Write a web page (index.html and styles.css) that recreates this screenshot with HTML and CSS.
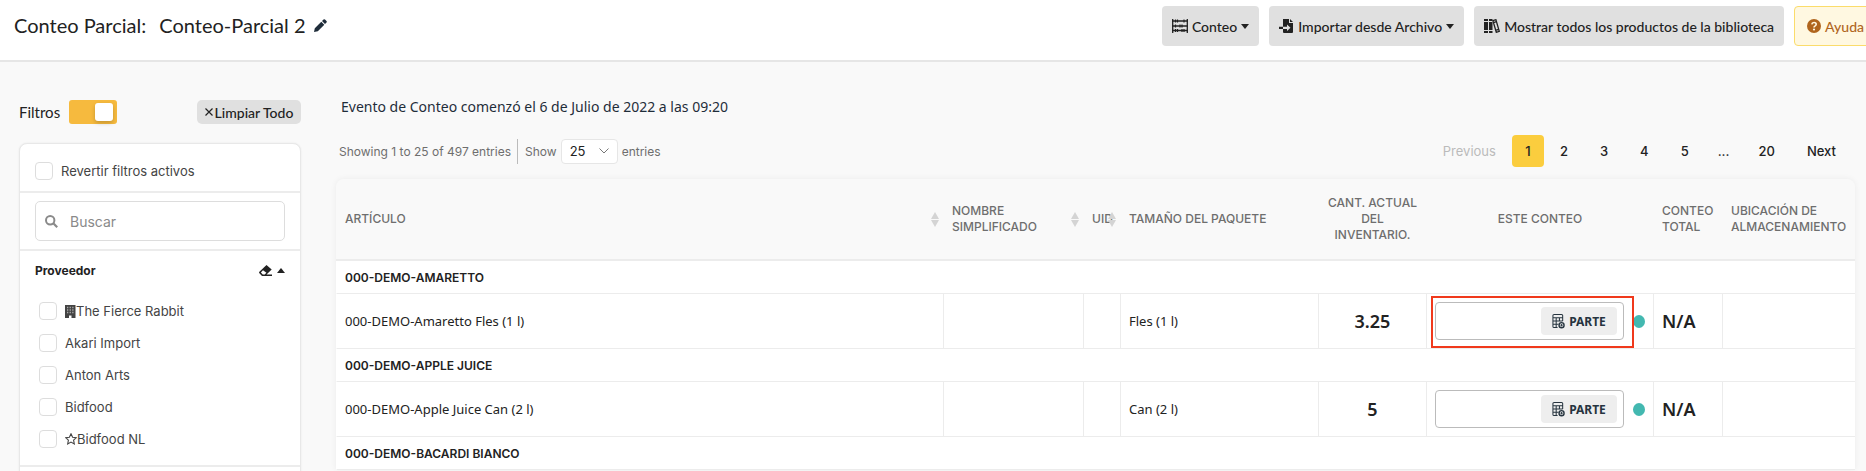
FILE: index.html
```html
<!DOCTYPE html>
<html lang="es">

<head>
    <meta charset="UTF-8">
    <meta name="viewport" content="width=device-width, initial-scale=1.0">
    <title>Conteo Parcial</title>
    <link rel="stylesheet" href="styles.css">
</head>

<body>
    <!-- iconos -->
    <svg class="defs" width="0" height="0">
        <symbol id="i-calc" viewBox="0 0 14 16">
            <path d="M11.5 8V2.2Q11.5 1 10.300 1H2.200Q1 1 1 2.200V13.800Q1 15 2.200 15H6M1 4.500H11.500M1 8H11.500M1 11.500H7M4.500 4.500V15M8 4.500V8.500" fill="none" stroke="currentColor" stroke-width="1.1" />
            <circle cx="10.300" cy="12.500" r="2.700" fill="#eee" stroke="currentColor" stroke-width="1.500" />
            <path d="M10.300 11.200V13.800M9 12.500H11.600" stroke="currentColor" stroke-width="1" />
        </symbol>
    </svg>

    <header class="topbar">
        <h1>Conteo Parcial: <span>Conteo-Parcial 2</span></h1>
        <button class="edit" aria-label="Editar nombre">
            <svg width="13" height="13" viewBox="0 0 13 13"><path d="M0 13L.8 9.200L7.300 2.700L10.300 5.700L3.800 12.200ZM8 2L9.500.5Q10.200-.1 11 .5L12.500 2Q13.200 2.800 12.500 3.500L11 5Z" fill="currentColor" /></svg>
        </button>
        <div class="actions">
            <button class="btn">
                <svg width="16" height="14" viewBox="0 0 16 14"><path d="M.7 0V14M15.300 0V14M0 2H16M0 7H16M0 11.500H16" stroke="currentColor" stroke-width="1.300" /><path d="M3.500.5V3.500M5.500.5V3.500M12 .5V3.500M3.500 5.500V8.500M8 5.500V8.500M10 5.500V8.500M3.500 10V13M5.500 10V13M10 10V13M12 10V13" stroke="currentColor" stroke-width="1.200" /></svg>
                Conteo
                <span class="caret"></span>
            </button>
            <button class="btn">
                <svg width="15" height="14" viewBox="0 0 15 14"><path d="M4 0H10V4H14V13Q14 14 13 14H5Q4 14 4 13V10H8V12L11.500 8.700L8 5.500V7.800H4ZM11 0L14 3H11ZM0 7.800H4V10H0Z" fill="currentColor" /></svg>
                Importar desde Archivo
                <span class="caret"></span>
            </button>
            <button class="btn">
                <svg width="16" height="14" viewBox="0 0 16 14"><path d="M0 0H4V2H0ZM0 3H4V11H0ZM0 12H4V14H0ZM5 0H8.500V2H5ZM5 3H8.500V11H5ZM5 12H8.500V14H5Z" fill="currentColor" /><path d="M8.900 1.700L11.900.7L15.300 12.300L12.300 13.300ZM9.500 3.700L12.500 2.700M11.700 11.300L14.700 10.300" fill="none" stroke="currentColor" stroke-width="1.300" /></svg>
                Mostrar todos los productos de la biblioteca
            </button>
            <button class="btn help">
                <svg width="14" height="14" viewBox="0 0 14 14"><circle cx="7" cy="7" r="7" fill="currentColor" /><path d="M4.800 5.300Q5 3.500 7 3.500Q9.200 3.500 9.200 5.300Q9.200 6.300 8.100 6.900Q7 7.400 7 8.400" fill="none" stroke="#fff8e1" stroke-width="1.600" /><circle cx="7" cy="10.500" r="1.100" fill="#fff8e1" /></svg>
                Ayuda
            </button>
        </div>
    </header>

    <div class="page">
        <aside class="sidebar">
            <div class="filter_head">
                <label for="filters_on">Filtros</label>
                <input type="checkbox" id="filters_on" class="switch" checked>
                <button class="clear">
                    <svg width="8" height="8" viewBox="0 0 8 8"><path d="M.5.5L7.500 7.500M7.500.5L.5 7.500" stroke="currentColor" stroke-width="1.200" /></svg>
                    Limpiar Todo
                </button>
            </div>
            <div class="card">
                <div class="block revert">
                    <label class="check"><input type="checkbox">Revertir filtros activos</label>
                </div>
                <div class="block search_block">
                    <div class="search">
                        <svg width="13" height="13" viewBox="0 0 13 13"><circle cx="5.200" cy="5.200" r="4.200" fill="none" stroke="currentColor" stroke-width="2" /><path d="M8.300 8.300L12.200 12.200" stroke="currentColor" stroke-width="2.200" /></svg>
                        <input type="text" placeholder="Buscar" aria-label="Buscar">
                    </div>
                </div>
                <div class="block vendor">
                    <div class="vendor_head">
                        <h2>Proveedor</h2>
                        <button aria-label="Borrar y plegar">
                            <svg width="13" height="11" viewBox="0 0 13 11"><path d="M7.500 0L12.700 4.500L7.500 9.500H13V11H3L.4 8.300Q-.2 7.500 .4 6.800ZM4 5.200L1.900 7.400L3.800 9.400H5.700L7.400 7.700Z" fill="currentColor" fill-rule="evenodd" /></svg>
                            <span class="caret up"></span>
                        </button>
                    </div>
                    <label class="check"><input type="checkbox">
                        <span><svg width="11" height="13" viewBox="0 0 11 13"><path d="M0 0H10.500V13H6.500V10.500H4V13H0Z" fill="currentColor" /><path d="M2 2.500H8.500M2 5H8.500M2 7.500H8.500" stroke="#aaa" stroke-width="1.300" stroke-dasharray="1.300 1.300" /></svg>The Fierce Rabbit</span></label>
                    <label class="check"><input type="checkbox">Akari Import</label>
                    <label class="check"><input type="checkbox">Anton Arts</label>
                    <label class="check"><input type="checkbox">Bidfood</label>
                    <label class="check"><input type="checkbox">
                        <span><svg width="12" height="12" viewBox="0 0 12 12"><path d="M6 .8L7.600 4.200L11.300 4.700L8.600 7.200L9.300 10.900L6 9.100L2.700 10.900L3.400 7.200L.7 4.700L4.400 4.200Z" fill="none" stroke="currentColor" stroke-width="1.100" /></svg>Bidfood NL</span></label>
                </div>
                <div class="block next_block"></div>
            </div>
        </aside>

        <main>
            <p class="event">Evento de Conteo comenzó el 6 de Julio de 2022 a las 09:20</p>
            <div class="table_bar">
                <span class="info">Showing 1 to 25 of 497 entries</span>
                <label class="length">Show
                    <select>
                        <option>25</option>
                        <option>50</option>
                        <option>100</option>
                    </select>
                    entries</label>
                <nav class="pages">
                    <a href="#" class="off">Previous</a>
                    <a href="#" class="current">1</a>
                    <a href="#">2</a>
                    <a href="#">3</a>
                    <a href="#">4</a>
                    <a href="#">5</a>
                    <span>...</span>
                    <a href="#">20</a>
                    <a href="#">Next</a>
                </nav>
            </div>

            <div class="table_card">
                <table>
                    <colgroup>
                        <col>
                        <col class="c_name">
                        <col class="c_uid">
                        <col class="c_size">
                        <col class="c_qty">
                        <col class="c_count">
                        <col class="c_total">
                        <col class="c_place">
                    </colgroup>
                    <thead>
                        <tr>
                            <th class="sort">Artículo</th>
                            <th class="sort">Nombre simplificado</th>
                            <th class="sort">UID</th>
                            <th>Tamaño del paquete</th>
                            <th class="mid">Cant. actual del inventario.</th>
                            <th class="mid">Este conteo</th>
                            <th>Conteo total</th>
                            <th>Ubicación de almacenamiento</th>
                        </tr>
                    </thead>
                    <tbody>
                        <tr class="group">
                            <td colspan="8">000-DEMO-AMARETTO</td>
                        </tr>
                        <tr class="item">
                            <td>000-DEMO-Amaretto Fles (1 l)</td>
                            <td></td>
                            <td></td>
                            <td>Fles (1 l)</td>
                            <td class="mid num">3.25</td>
                            <td class="marked">
                                <div class="count">
                                    <div class="field">
                                        <input type="text" aria-label="Este conteo">
                                        <button><svg width="13" height="16"><use href="#i-calc" /></svg>PARTE</button>
                                    </div>
                                    <span class="dot"></span>
                                </div>
                            </td>
                            <td class="num">N/A</td>
                            <td></td>
                        </tr>
                        <tr class="group">
                            <td colspan="8">000-DEMO-APPLE JUICE</td>
                        </tr>
                        <tr class="item">
                            <td>000-DEMO-Apple Juice Can (2 l)</td>
                            <td></td>
                            <td></td>
                            <td>Can (2 l)</td>
                            <td class="mid num">5</td>
                            <td>
                                <div class="count">
                                    <div class="field">
                                        <input type="text" aria-label="Este conteo">
                                        <button><svg width="13" height="16"><use href="#i-calc" /></svg>PARTE</button>
                                    </div>
                                    <span class="dot"></span>
                                </div>
                            </td>
                            <td class="num">N/A</td>
                            <td></td>
                        </tr>
                        <tr class="group">
                            <td colspan="8">000-DEMO-BACARDI BIANCO</td>
                        </tr>
                    </tbody>
                </table>
            </div>
        </main>
    </div>
</body>

</html>
```

FILE: styles.css
```css
* {
    box-sizing: border-box;
    margin: 0;
    padding: 0;
}

html {
    overflow: hidden;
}

body {
    background-color: #f9f9f9;
    color: #222;
    font-family: Inter, "Liberation Sans", sans-serif;
    font-size: 13px;
}

button {
    border: none;
    background: none;
    color: inherit;
    font-family: inherit;
    white-space: nowrap;
}

svg {
    flex: none;
}

.defs {
    position: absolute;
}

/* cabecera */
.topbar {
    display: flex;
    align-items: flex-start;
    height: 62px;
    padding: 6px 0 0 14px;
    border-bottom: 2px solid #e6e6e6;
    background-color: #fff;
}

h1 {
    font-family: Lato, sans-serif;
    font-size: 20px;
    font-weight: 400;
    line-height: 38px;
    white-space: nowrap;
}

h1 span {
    margin-left: 8px;
}

.edit {
    display: flex;
    align-items: center;
    height: 38px;
    margin-left: 8px;
    color: #1f2d3a;
}

.actions {
    display: flex;
    gap: 10px;
    margin-left: auto;
    margin-right: -11px;
}

.btn {
    display: flex;
    align-items: center;
    gap: 4px;
    height: 40px;
    padding: 0 10px;
    border-radius: 4px;
    background-color: #e0e0e0;
    font-family: Lato, sans-serif;
    font-size: 14px;
    font-weight: 500;
}

.caret {
    border: 4px solid transparent;
    border-top: 5px solid currentColor;
    border-bottom: none;
}

.caret.up {
    border-top: none;
    border-bottom: 5px solid currentColor;
}

.help {
    padding: 0 12px;
    border: 1px solid #fbdc6b;
    background-color: #fff8e1;
    color: #b0651d;
}

.page {
    display: flex;
    gap: 35px;
    padding: 38px 11px 0 19px;
}

/* filtros */
.sidebar {
    flex: none;
    width: 282px;
}

.filter_head {
    display: flex;
    align-items: center;
    gap: 9px;
    height: 24px;
    font-family: Lato, sans-serif;
    font-size: 15px;
}

.switch {
    display: flex;
    align-items: center;
    justify-content: flex-end;
    width: 48px;
    height: 24px;
    padding: 0 4px;
    border-radius: 3px;
    background-color: #f6ba3e;
    appearance: none;
}

.switch::before {
    content: "";
    width: 18px;
    height: 18px;
    border-radius: 3px;
    background-color: #fff;
    box-shadow: 0 2px 4px rgba(0, 0, 0, .2);
}

.clear {
    display: flex;
    align-items: center;
    justify-content: center;
    gap: 2px;
    width: 104px;
    height: 24px;
    margin-left: auto;
    border-radius: 5px;
    background-color: #e0e0e0;
    font-size: 14px;
    font-weight: 500;
}

.card {
    margin-top: 19px;
    border: 1px solid #e8e8e8;
    border-radius: 8px;
    background-color: #fff;
    box-shadow: 0 0 2px rgba(0, 0, 0, .08);
}

.block {
    padding: 0 15px;
    border-bottom: 2px solid #ececec;
}

.revert {
    padding-top: 11px;
    padding-bottom: 4px;
}

.check {
    display: flex;
    align-items: center;
    gap: 8px;
    height: 32px;
    color: #444;
}

.check input {
    width: 18px;
    height: 18px;
    border: 1px solid #ddd;
    border-radius: 4px;
    background-color: #fff;
    appearance: none;
}

.check span {
    display: flex;
    align-items: center;
}

.search_block {
    padding-top: 8px;
    padding-bottom: 8px;
}

.search {
    display: flex;
    align-items: center;
    gap: 12px;
    height: 40px;
    padding: 0 9px;
    border: 1px solid #ddd;
    border-radius: 5px;
    color: #8a8a8a;
}

.search input {
    flex: 1;
    min-width: 0;
    border: none;
    outline: none;
    font-family: inherit;
    font-size: 14px;
}

.search input::placeholder {
    color: #8a8a8a;
}

.vendor {
    padding-bottom: 10px;
}

.vendor_head {
    display: flex;
    align-items: center;
    justify-content: space-between;
    height: 44px;
    padding-bottom: 5px;
}

.vendor_head button {
    display: flex;
    align-items: center;
    gap: 5px;
}

h2 {
    font-size: 12px;
    font-weight: 700;
}

.vendor .check {
    padding-left: 4px;
}

.next_block {
    height: 44px;
}

/* tabla */
main {
    flex: 1;
    min-width: 0;
}

.event {
    margin-top: -1px;
    padding-left: 5px;
    color: #1f2d3a;
    font-family: "Noto Sans", sans-serif;
    font-size: 14px;
    line-height: 16px;
}

.table_bar {
    display: flex;
    align-items: center;
    height: 32px;
    margin-top: 20px;
    padding: 0 3px;
    color: #6e6e6e;
    font-size: 12px;
}

.info {
    padding-right: 6px;
    border-right: 1px solid #bbb;
    line-height: 25px;
}

.length {
    display: flex;
    align-items: center;
    gap: 4px;
    margin-left: 7px;
}

select {
    width: 57px;
    height: 25px;
    padding-left: 8px;
    border: 1px solid #e6e6e6;
    border-radius: 4px;
    background: #fff url("data:image/svg+xml,%3Csvg xmlns='http://www.w3.org/2000/svg' width='10' height='6'%3E%3Cpath d='M.5.5L5 5L9.500.5' fill='none' stroke='%23777'/%3E%3C/svg%3E") no-repeat right 8px center;
    color: #222;
    font-family: inherit;
    font-size: 13px;
    appearance: none;
}

.pages {
    display: flex;
    margin-left: auto;
    color: #222;
    font-size: 13px;
    font-weight: 500;
    line-height: 32px;
}

.pages a {
    padding: 0 16px;
    color: inherit;
    text-decoration: none;
}

.pages span {
    padding: 0 13px;
}

.pages .off {
    color: #bbb;
    font-weight: 400;
}

.pages .current {
    width: 32px;
    padding: 0;
    border-radius: 4px;
    background-color: #fbcd3e;
    text-align: center;
}

.table_card {
    margin-top: 12px;
    border-radius: 8px 8px 0 0;
    box-shadow: 0 0 6px rgba(0, 0, 0, .06);
}

table {
    width: 100%;
    border-spacing: 0;
    table-layout: fixed;
}

.c_name {
    width: 140px;
}

.c_uid {
    width: 37px;
}

.c_size {
    width: 198px;
}

.c_qty {
    width: 108px;
}

.c_count {
    width: 227px;
}

.c_total {
    width: 69px;
}

.c_place {
    width: 133px;
}

th {
    position: relative;
    height: 82px;
    padding: 0 8px 0 9px;
    border-bottom: 2px solid #ececec;
    color: #6e6e6e;
    font-size: 12px;
    font-weight: 500;
    line-height: 16px;
    text-align: left;
    text-transform: uppercase;
}

.sort::before,
.sort::after {
    content: "";
    position: absolute;
    right: 4px;
    border: 4px solid transparent;
}

.sort::before {
    bottom: 40px;
    border-top: none;
    border-bottom: 7px solid #d4d4d4;
}

.sort::after {
    top: 41px;
    border-bottom: none;
    border-top: 7px solid #d4d4d4;
}

td {
    padding: 0 8px;
    border-left: 1px solid #ececec;
    border-bottom: 1px solid #ececec;
    background-color: #fff;
}

td:first-child {
    border-left-color: #fff;
}

.group td {
    height: 33px;
    font-size: 12px;
    font-weight: 600;
}

.item td {
    height: 55px;
    font-family: "Noto Sans", sans-serif;
    font-size: 13px;
}

th.mid,
td.mid {
    text-align: center;
}

.item .num {
    font-size: 18px;
    font-weight: 600;
}

.count {
    display: flex;
    align-items: center;
    gap: 9px;
}

.field {
    display: flex;
    align-items: center;
    width: 189px;
    height: 38px;
    padding: 0 6px;
    border: 1px solid #bbb;
    border-radius: 4px;
}

.field input {
    flex: 1;
    min-width: 0;
    border: none;
    outline: none;
}

.field button {
    display: flex;
    align-items: center;
    justify-content: center;
    gap: 4px;
    width: 76px;
    height: 28px;
    border-radius: 4px;
    background-color: #eee;
    color: #26343f;
    font-size: 12px;
    font-weight: 700;
}

.dot {
    width: 13px;
    height: 13px;
    border-radius: 50%;
    background-color: #43b8b0;
}

.marked {
    position: relative;
}

.marked::after {
    content: "";
    position: absolute;
    top: 2px;
    left: 4px;
    width: 199px;
    height: 48px;
    border: 2px solid #f0391c;
    pointer-events: none;
}
```
